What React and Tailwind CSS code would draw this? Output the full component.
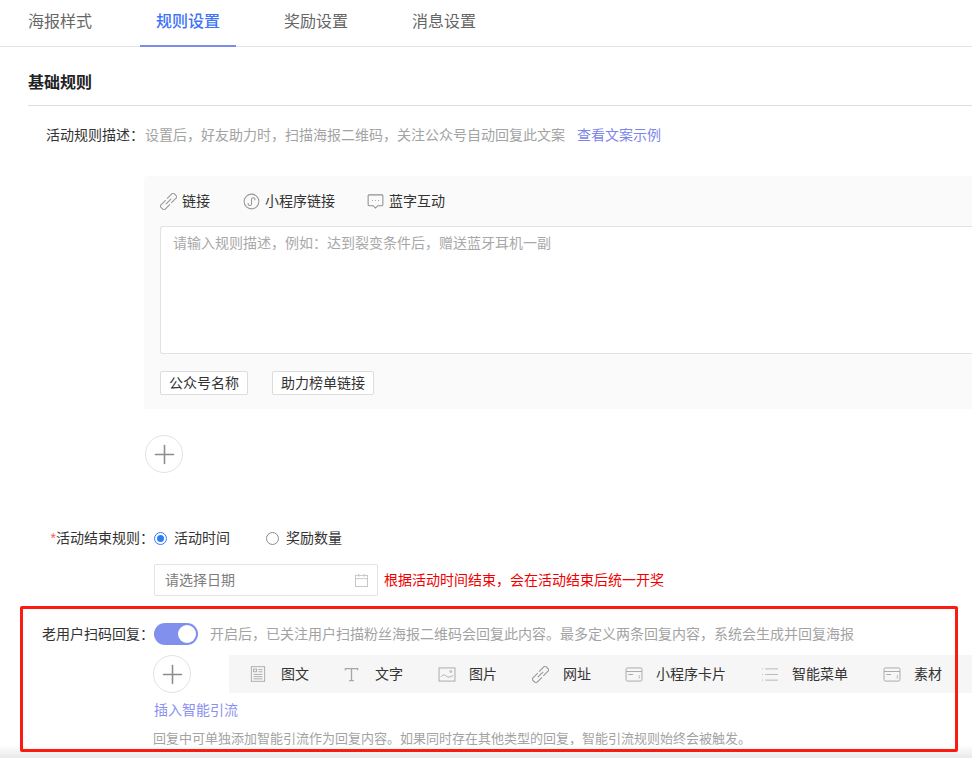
import React from 'react';
import { Plus } from 'lucide-react';

const tabs = ['海报样式', '规则设置', '奖励设置', '消息设置'];

const LinkIcon = ({ className }) => (
  <svg viewBox="0 0 18 18" fill="none" stroke="#999" strokeWidth="1.200" className={className}>
    <g transform="rotate(-45 9 9)">
      <path d="M8 5.800H0.500a1.500 1.500 0 0 0-1.500 1.500v3.400a1.500 1.500 0 0 0 1.500 1.500H8" />
      <path d="M10 5.800h7.500a1.500 1.500 0 0 1 1.500 1.500v3.400a1.500 1.500 0 0 1-1.500 1.500H10" />
      <path d="M5 9h8" />
    </g>
  </svg>
);

const MiniIcon = () => (
  <svg viewBox="0 0 18 18" fill="none" stroke="#999" strokeWidth="1.100" className="h-[17px] w-[17px]">
    <circle cx="9" cy="9" r="7.800" />
    <path d="M5.600 10.600a1.800 1.800 0 1 0 3.400.800V6.800a1.800 1.800 0 1 1 3.400.800" />
  </svg>
);

const ChatIcon = () => (
  <svg viewBox="0 0 18 18" fill="none" stroke="#8f8f8f" strokeWidth="1.100" className="h-[17px] w-[17px]">
    <path d="M2.200 2h13.600a1 1 0 0 1 1 1v9.500a1 1 0 0 1-1 1h-4.300L9 16l-2.500-2.500H2.200a1 1 0 0 1-1-1V3a1 1 0 0 1 1-1z" />
    <path d="M5.500 8h.8M8.600 8h.8M11.700 8h.8" />
  </svg>
);

const ArticleIcon = () => (
  <svg viewBox="0 0 16 18" fill="none" stroke="#a6a6a6" strokeWidth="1" className="h-[16px] w-[16px]">
    <rect x="0.500" y="0.800" width="15" height="16.400" />
    <rect x="3" y="3.500" width="3.500" height="3" />
    <path d="M8.500 4h4.500M8.500 6.500h4.500M3 9.500h10M3 12h10M3 14.500h10" />
  </svg>
);

const TextIcon = () => (
  <svg viewBox="0 0 16 16" fill="none" stroke="#a6a6a6" strokeWidth="1.400" className="h-[15px] w-[15px]">
    <path d="M1.500 3.500V1.700h13v1.800M8 1.700v12.800M5.500 14.500h5" />
  </svg>
);

const ImageIcon = () => (
  <svg viewBox="0 0 18 16" fill="none" stroke="#a6a6a6" strokeWidth="1" className="h-[15px] w-[18px]">
    <rect x="0.500" y="1" width="17" height="14" />
    <circle cx="13" cy="4.800" r="1" />
    <path d="M2.500 10.500c2-2.500 3.500-2.500 5.500-1s3.500 2 7.500-.5" />
  </svg>
);

const CardIcon = () => (
  <svg viewBox="0 0 18 16" fill="none" stroke="#a6a6a6" strokeWidth="1" className="h-[15px] w-[18px]">
    <rect x="0.500" y="1" width="17" height="14" rx="1.500" />
    <path d="M0.500 4.800h17M3 8h5M14 9.500h1.500M14 11.500h1.500" />
  </svg>
);

const MenuIcon = () => (
  <svg viewBox="0 0 18 16" fill="none" stroke="#b5b5b5" strokeWidth="1" className="h-[15px] w-[18px]">
    <path d="M0.500 2h1M4 2h13.500M0.500 8h1M4 8h13.500M0.500 14h1M4 14h13.500" />
  </svg>
);

const CalendarIcon = () => (
  <svg viewBox="0 0 14 14" fill="none" stroke="#c4c4c4" strokeWidth="1" className="h-[13px] w-[13px]">
    <rect x="0.500" y="1.500" width="13" height="12" />
    <path d="M0.500 5h13M4 0v3M10 0v3" />
  </svg>
);

const editorTools = [
  { label: '链接', icon: <LinkIcon className="h-[17px] w-[17px]" />, width: 'w-[83px]' },
  { label: '小程序链接', icon: <MiniIcon />, width: 'w-[124px]' },
  { label: '蓝字互动', icon: <ChatIcon />, width: 'w-[90px]' },
];

const replyTools = [
  { label: '图文', icon: <ArticleIcon />, width: 'w-[94px]' },
  { label: '文字', icon: <TextIcon />, width: 'w-[94px]' },
  { label: '图片', icon: <ImageIcon />, width: 'w-[94px]' },
  { label: '网址', icon: <LinkIcon className="h-[17px] w-[17px]" />, width: 'w-[93px]' },
  { label: '小程序卡片', icon: <CardIcon />, width: 'w-[136px]' },
  { label: '智能菜单', icon: <MenuIcon />, width: 'w-[122px]' },
  { label: '素材', icon: <CardIcon />, width: 'w-[70px]' },
];

function AddButton() {
  return (
    <div className="flex h-[38px] w-[38px] shrink-0 items-center justify-center rounded-full border border-[#e3e3e3] bg-white">
      <Plus size={31} strokeWidth={1.2} color="#8c8c8c" />
    </div>
  );
}

export default function App() {
  return (
    <div className="relative h-[758px] w-[972px] overflow-hidden bg-white font-['Liberation_Sans','Noto_Sans_CJK_SC',sans-serif] text-sm leading-5 text-[#333]">
      <div className="flex h-[47px] gap-8 border-b border-[#e4e4e4] pl-3">
        {tabs.map((tab, i) => (
          <div
            key={tab}
            className={`flex h-[47px] items-center border-b-2 px-4 pb-[1px] text-base ${i === 1 ? 'border-[#7b8cee] font-medium text-[#3f74f6]' : 'border-transparent text-[#666]'}`}
          >
            {tab}
          </div>
        ))}
      </div>

      <div className="ml-7 flex h-[59px] items-center border-b border-[#dcdcdc] pt-[13px] text-base font-bold text-[#222]">基础规则</div>

      <div className="mt-[19px] flex h-5 items-center">
        <div className="w-[145px] pr-[1px] text-right text-[#333]">活动规则描述：</div>
        <span className="text-[#a3a3a3]">设置后，好友助力时，扫描海报二维码，关注公众号自动回复此文案</span>
        <span className="ml-3 text-[#7c86e8]">查看文案示例</span>
      </div>

      <div className="ml-[144px] mt-[31px] h-[233px] rounded-tl-sm bg-[#fafafa] pl-4 pt-4">
        <div className="flex h-[18px] items-center">
          {editorTools.map((tool) => (
            <div key={tool.label} className={`flex items-center gap-[5px] ${tool.width}`}>
              {tool.icon}
              <span className="whitespace-nowrap">{tool.label}</span>
            </div>
          ))}
        </div>
        <div className="mt-4 h-[128px] rounded-l-[3px] border border-r-0 border-[#e2e2e2] bg-white pl-3 pt-[6px] text-[#a8a8a8]">
          请输入规则描述，例如：达到裂变条件后，赠送蓝牙耳机一副
        </div>
        <div className="mt-[17px] flex gap-6">
          <div className="flex h-6 items-center rounded-[2px] border border-[#dcdcdc] bg-white px-2">公众号名称</div>
          <div className="flex h-6 items-center rounded-[2px] border border-[#dcdcdc] bg-white px-2">助力榜单链接</div>
        </div>
      </div>

      <div className="ml-[145px] mt-[26px]">
        <AddButton />
      </div>

      <div className="mt-[55px] flex h-5 items-center">
        <div className="w-[154px] text-right text-[#333]">
          <span className="text-[#f25c4d]">*</span>活动结束规则：
        </div>
        <div className="flex items-center gap-[7px]">
          <span className="flex h-[13px] w-[13px] items-center justify-center rounded-full border border-[#2f7df6] bg-white">
            <span className="h-[7px] w-[7px] rounded-full bg-[#2f7df6]" />
          </span>
          活动时间
        </div>
        <div className="ml-9 flex items-center gap-[7px]">
          <span className="h-[13px] w-[13px] rounded-full border border-[#8c8c8c] bg-white" />
          奖励数量
        </div>
      </div>

      <div className="ml-[154px] mt-4 flex items-center">
        <div className="flex h-8 w-[224px] items-center justify-between rounded-[2px] border border-[#e4e4e4] pl-[10px] pr-[9px] text-[#7d7d7d]">
          请选择日期
          <CalendarIcon />
        </div>
        <span className="ml-[6px] text-[#f00000]">根据活动时间结束，会在活动结束后统一开奖</span>
      </div>

      <div className="mt-[27px] flex h-[22px] items-center">
        <div className="w-[154px] text-right text-[#333]">老用户扫码回复：</div>
        <div className="flex h-[22px] w-[44px] items-center justify-end rounded-full bg-[#8090ec] pr-[2px]">
          <span className="h-[18px] w-[18px] rounded-full bg-white" />
        </div>
        <span className="ml-3 text-[#a3a3a3]">开启后，已关注用户扫描粉丝海报二维码会回复此内容。最多定义两条回复内容，系统会生成并回复海报</span>
      </div>

      <div className="ml-[153px] mt-[10px] flex gap-[38px]">
        <AddButton />
        <div className="flex h-[38px] flex-1 items-center bg-[#f6f6f6] pl-[21px]">
          {replyTools.map((tool) => (
            <div key={tool.label} className={`flex shrink-0 items-center ${tool.width}`}>
              <span className="flex w-[31px] shrink-0 items-center">{tool.icon}</span>
              <span className="whitespace-nowrap">{tool.label}</span>
            </div>
          ))}
        </div>
      </div>

      <div className="ml-[154px] mt-[7px] text-[#8a90f0]">插入智能引流</div>
      <div className="ml-[153px] mt-[9px] text-[13px] text-[#a3a3a3]">回复中可单独添加智能引流作为回复内容。如果同时存在其他类型的回复，智能引流规则始终会被触发。</div>

      <div className="absolute bottom-0 left-0 h-[13px] w-full bg-gradient-to-b from-[#ffffff] to-[#e9e9e9]" />
      <div className="absolute left-[20px] top-[606px] h-[146px] w-[938px] rounded-[2px] border-[3px] border-[#fa1c10]" />
    </div>
  );
}
